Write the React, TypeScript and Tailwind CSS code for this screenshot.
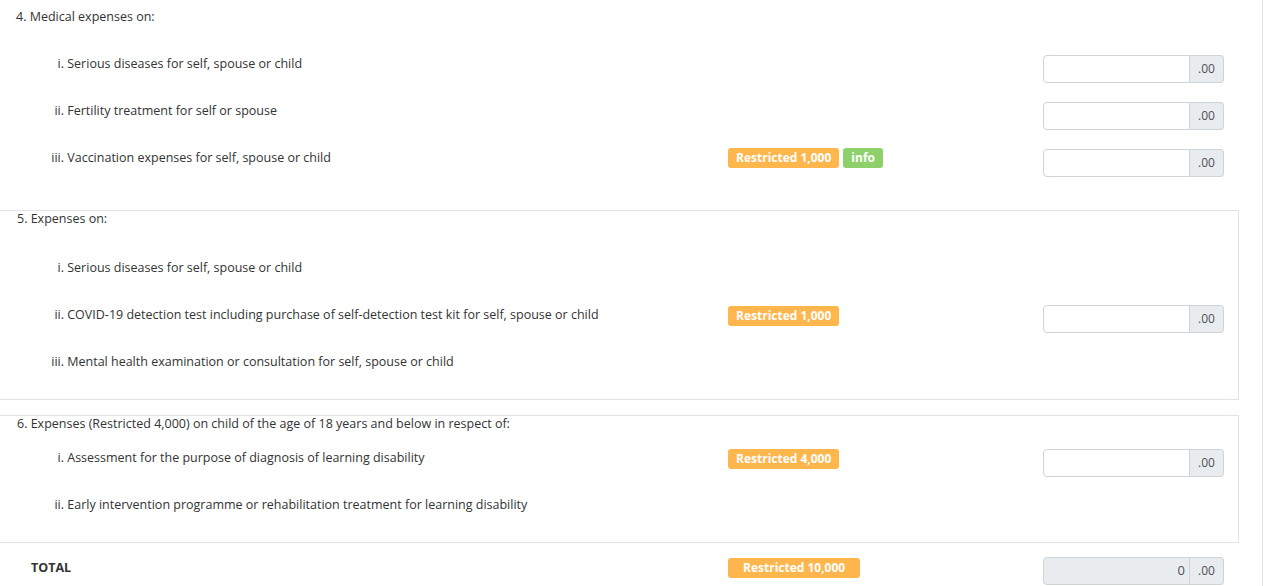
import React from 'react'

const font = { fontFamily: '"Open Sans", "Liberation Sans", sans-serif' }

function Badge({ children, color = 'orange', wide = false }: { children: React.ReactNode; color?: 'orange' | 'green'; wide?: boolean }) {
  return (
    <span
      className={`inline-flex h-[20px] items-center rounded-[3px] text-[12px] font-bold text-white ${
        color === 'orange' ? 'bg-[#ffb64d]' : 'bg-[#8ed16b]'
      } ${wide ? 'px-[15px]' : 'px-[8px]'}`}
    >
      {children}
    </span>
  )
}

function Amount({ value = '', disabled = false }: { value?: string; disabled?: boolean }) {
  return (
    <div className="flex h-[28px] w-[181px]">
      <div
        className={`flex flex-1 items-center justify-end rounded-l-[4px] border border-[#ced4da] pr-[4px] text-[13px] text-[#495057] ${
          disabled ? 'bg-[#e9ecef]' : 'bg-white'
        }`}
      >
        {value}
      </div>
      <div className="flex w-[34px] items-center justify-center rounded-r-[4px] border border-l-0 border-[#ced4da] bg-[#e9ecef] text-[12px] text-[#495057]">
        .00
      </div>
    </div>
  )
}

type Item = {
  num: string
  text: string
  badge?: React.ReactNode
  input?: boolean
  badgeTop?: string
  inputTop?: string
}

function Row({ item }: { item: Item }) {
  return (
    <div className="flex h-[47px] items-start">
      <div className="w-[728px] pl-[16px] pt-px leading-5">
        <span className="inline-block w-[48px] text-right">{item.num}</span> {item.text}
      </div>
      <div className={`flex w-[315px] gap-[4px] ${item.badgeTop ?? 'pt-px'}`}>{item.badge}</div>
      <div className={item.inputTop ?? 'pt-[2px]'}>{item.input && <Amount />}</div>
    </div>
  )
}

export default function App() {
  const medical: Item[] = [
    { num: 'i.', text: 'Serious diseases for self, spouse or child', input: true },
    { num: 'ii.', text: 'Fertility treatment for self or spouse', input: true },
    {
      num: 'iii.',
      text: 'Vaccination expenses for self, spouse or child',
      input: true,
      badge: (
        <>
          <Badge>Restricted 1,000</Badge>
          <Badge color="green">info</Badge>
        </>
      ),
    },
  ]

  const expenses: Item[] = [
    { num: 'i.', text: 'Serious diseases for self, spouse or child' },
    {
      num: 'ii.',
      text: 'COVID-19 detection test including purchase of self-detection test kit for self, spouse or child',
      badge: <Badge>Restricted 1,000</Badge>,
      input: true,
      badgeTop: 'pt-[2px]',
      inputTop: 'pt-px',
    },
    { num: 'iii.', text: 'Mental health examination or consultation for self, spouse or child' },
  ]

  const child: Item[] = [
    {
      num: 'i.',
      text: 'Assessment for the purpose of diagnosis of learning disability',
      badge: <Badge>Restricted 4,000</Badge>,
      input: true,
      badgeTop: 'pt-[2px]',
      inputTop: 'pt-[2px]',
    },
    { num: 'ii.', text: 'Early intervention programme or rehabilitation treatment for learning disability' },
  ]

  return (
    <div style={font} className="h-[586px] w-[1263px] overflow-hidden border-r border-[#e4e4e4] bg-white text-[12.5px] text-[#333]">
      {/* 4. Medical */}
      <div className="pt-[7px]">
        <div className="pl-[16px] leading-5">4. Medical expenses on:</div>
        <div className="mt-[26px]">
          {medical.map((it) => (
            <Row key={it.num} item={it} />
          ))}
        </div>
      </div>

      {/* 5. Expenses */}
      <div className="mt-[16px] h-[190px] w-[1239px] border-y border-r border-[#dde5ea]">
        <div className="pl-[17px] leading-4">5. Expenses on:</div>
        <div className="mt-[30px]">
          {expenses.map((it) => (
            <Row key={it.num} item={it} />
          ))}
        </div>
      </div>

      {/* 6. Child */}
      <div className="mt-[15px] h-[128px] w-[1239px] border-y border-r border-[#dde5ea]">
        <div className="pl-[17px] leading-4">6. Expenses (Restricted 4,000) on child of the age of 18 years and below in respect of:</div>
        <div className="mt-[15px]">
          {child.map((it) => (
            <Row key={it.num} item={it} />
          ))}
        </div>
      </div>

      {/* Total */}
      <div className="flex items-start pt-[14px]">
        <div className="w-[728px] pl-[31px] pt-[1px] font-bold leading-5">TOTAL</div>
        <div className="w-[315px] pt-[1px]">
          <Badge wide>Restricted 10,000</Badge>
        </div>
        <Amount value="0" disabled />
      </div>
    </div>
  )
}
